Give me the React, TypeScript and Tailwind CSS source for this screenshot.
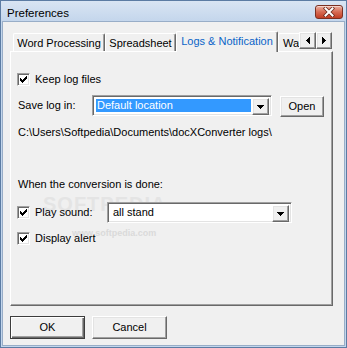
const raised =
  "bg-[#f0f0f0] border border-t-white border-l-white border-r-[#696969] border-b-[#696969] shadow-[inset_-1px_-1px_0_#a0a0a0,inset_1px_1px_0_#e3e3e3]";
const sunken =
  "border border-t-[#a0a0a0] border-l-[#a0a0a0] border-r-white border-b-white shadow-[inset_1px_1px_0_#696969,inset_-1px_-1px_0_#e3e3e3]";

const Check = () => (
  <div className={`w-[13px] h-[13px] bg-white flex items-center justify-center shrink-0 ${sunken}`}>
    <svg width="7" height="7" viewBox="0 0 7 7" shapeRendering="crispEdges">
      <path d="M0 2h1v1h1v1h1v-1h1v-1h1v-1h1v-1h1v3h-1v1h-1v1h-1v1h-1v1h-1v-1h-1v-1h-1z" fill="#000" />
    </svg>
  </div>
);

const DownArrow = () => (
  <svg width="7" height="4" viewBox="0 0 7 4" shapeRendering="crispEdges">
    <path d="M0 0h7v1h-1v1h-1v1h-1v1h-1v-1h-1v-1h-1v-1h-1z" fill="#000" />
  </svg>
);

const Combo = ({ text, selected, width }: { text: string; selected?: boolean; width: string }) => (
  <div className={`${width} h-[21px] bg-white flex p-[2px] ${sunken}`}>
    <div className="flex-1 flex p-[1px] min-w-0">
      <div
        className={`flex-1 flex items-center whitespace-nowrap overflow-hidden ${
          selected ? "bg-[#3399ff] text-white pl-[1px]" : "text-black pl-[2px]"
        }`}
      >
        {text}
      </div>
    </div>
    <div className={`w-[17px] h-[17px] flex items-center justify-center ${raised}`}>
      <DownArrow />
    </div>
  </div>
);

const tabBase =
  "border-t border-l border-r border-t-white border-l-white border-r-[#696969] rounded-t-[2px] shadow-[inset_-1px_0_0_#a0a0a0] bg-[#f0f0f0] whitespace-nowrap flex justify-center";

export default function App() {
  return (
    <div className="w-[347px] h-[348px] border border-[#5c7ca3] bg-[#c3d6ec] flex flex-col font-['Liberation_Sans',Arial,sans-serif] text-[11px] leading-[13px] text-black overflow-hidden">
      {/* title bar */}
      <div className="h-[20px] flex items-start bg-gradient-to-b from-[#d9e5f3] to-[#c4d6ec] shrink-0">
        <span className="ml-[6px] mt-[6px] text-[11.5px]">Preferences</span>
        <div className="ml-auto mr-[3px] mt-[4px] w-[28px] h-[14px] rounded-[3px] border border-[#7a3022] bg-gradient-to-b from-[#eab0a2] via-[#d66a52] to-[#c13c22] flex items-center justify-center shadow-[inset_0_1px_0_#f6d3ca]">
          <svg width="12" height="10" viewBox="0 0 12 10">
            <path d="M2.5 1.5l7 7M9.5 1.5l-7 7" stroke="#6b2a1e" strokeWidth="3.6" strokeLinecap="square" />
            <path d="M2.5 1.5l7 7M9.5 1.5l-7 7" stroke="#fff" strokeWidth="2" strokeLinecap="square" />
          </svg>
        </div>
      </div>

      {/* client */}
      <div className="flex-1 mx-[1px] mb-[1px] bg-[#f0f0f0] border border-[#98adc7] flex flex-col pl-[7px] pt-[9px]">
        {/* tabs */}
        <div className="relative z-10 flex items-end h-[20px] w-[323px]">
          <div className={`${tabBase} ml-[3px] w-[92px] h-[18px] pt-[3px]`}>Word Processing</div>
          <div className={`${tabBase} w-[71px] h-[18px] pt-[3px]`}>Spreadsheet</div>
          <div className={`${tabBase} w-[102px] h-[21px] -mb-[1px] pt-[3px] text-[#0a64c8]`}>
            Logs &amp; Notification
          </div>
          <div className="w-[21px] h-[18px] border-t border-l border-t-white border-l-white rounded-tl-[2px] bg-[#f0f0f0] overflow-hidden whitespace-nowrap pl-[4px] pt-[3px]">
            Watch Folder
          </div>
          <div className="self-start mt-[1px] flex">
            <div className={`w-[17px] h-[17px] flex items-center justify-center ${raised}`}>
              <svg width="4" height="7" viewBox="0 0 4 7" shapeRendering="crispEdges">
                <path d="M3 0h1v7h-1v-1h-1v-1h-1v-1h-1v-1h1v-1h1v-1h1z" fill="#000" />
              </svg>
            </div>
            <div className={`w-[16px] h-[17px] flex items-center justify-center ${raised}`}>
              <svg width="4" height="7" viewBox="0 0 4 7" shapeRendering="crispEdges">
                <path d="M0 0h1v1h1v1h1v1h1v1h-1v1h-1v1h-1v1h-1z" fill="#000" />
              </svg>
            </div>
          </div>
        </div>

        {/* panel */}
        <div className="relative w-[323px] h-[255px] border border-t-white border-l-white border-r-[#696969] border-b-[#696969] shadow-[inset_-1px_-1px_0_#a0a0a0] flex flex-col pl-[6px]">
          <div className="absolute left-[32px] top-[146px] text-[20px] font-bold tracking-[1px] text-[#e4e4e4] pointer-events-none">
            SOFTPEDIA<span className="text-[7px] align-top ml-[2px]">™</span>
          </div>
          <div className="absolute left-[61px] top-[175px] text-[9px] font-bold text-[#dadada] pointer-events-none">
            www.softpedia.com
          </div>

          <div className="relative flex items-center h-[13px] mt-[21px]">
            <Check />
            <span className="ml-[5px]">Keep log files</span>
          </div>

          <div className="relative flex items-start h-[22px] mt-[9px]">
            <span className="w-[75px] pl-[1px] mt-[4px]">Save log in:</span>
            <Combo text="Default location" selected width="w-[180px]" />
            <div className={`ml-[8px] mt-[1px] w-[44px] h-[21px] flex items-center justify-center ${raised}`}>
              Open
            </div>
          </div>

          <div className="relative mt-[8px] leading-[14px] pl-[1px]">
            C:\Users\Softpedia\Documents\docXConverter logs\
          </div>

          <div className="relative mt-[38px] leading-[14px] pl-[1px]">When the conversion is done:</div>

          <div className="relative flex items-center h-[21px] mt-[11px]">
            <Check />
            <span className="ml-[5px] w-[72px]">Play sound:</span>
            <Combo text="all stand" width="w-[185px]" />
          </div>

          <div className="relative flex items-center h-[13px] mt-[9px]">
            <Check />
            <span className="ml-[5px]">Display alert</span>
          </div>
        </div>

        {/* buttons */}
        <div className="flex gap-[7px] mt-[10px]">
          <div className="w-[75px] h-[23px] border border-[#3c3c3c] bg-[#f0f0f0] shadow-[inset_1px_1px_0_#fff,inset_-1px_-1px_0_#696969,inset_-2px_-2px_0_#a0a0a0] flex items-center justify-center">
            OK
          </div>
          <div className={`w-[75px] h-[23px] flex items-center justify-center ${raised}`}>Cancel</div>
        </div>
      </div>
    </div>
  );
}
